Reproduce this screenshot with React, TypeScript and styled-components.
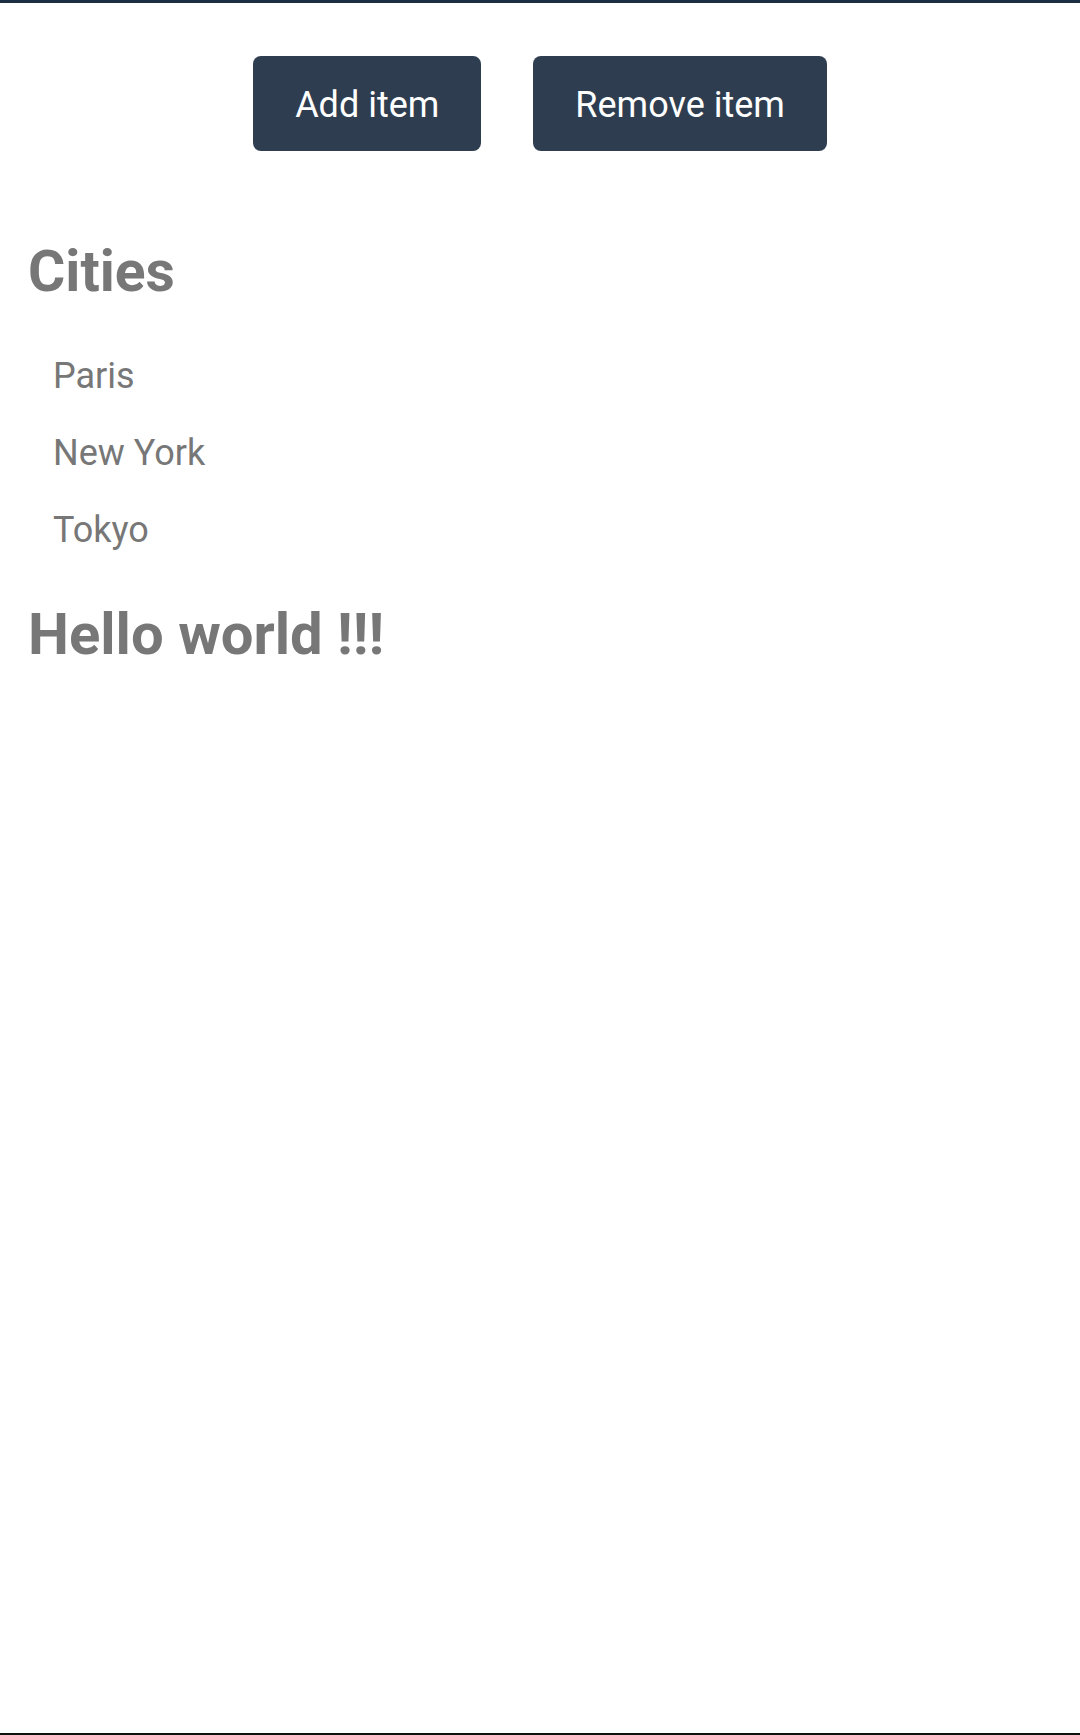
import React from "react";
import styled, { createGlobalStyle } from "styled-components";

const GlobalStyle = createGlobalStyle`
  html, body {
    margin: 0;
    padding: 0;
    background: #ffffff;
  }
  body {
    font-family: Roboto, "Noto Sans", "Liberation Sans", sans-serif;
  }
  * {
    box-sizing: border-box;
  }
`;

const Screen = styled.div`
  min-height: 100vh;
  display: flex;
  flex-direction: column;
  border-top: 3px solid #1c2e43;
  border-bottom: 2px solid #111111;
  background: #ffffff;
`;

const Toolbar = styled.div`
  display: flex;
  justify-content: center;
  gap: 52px;
  padding-top: 53px;
`;

const ActionButton = styled.button`
  height: 95px;
  padding: 3px 42px 0;
  border: none;
  border-radius: 8px;
  background: #2e3e50;
  color: #ffffff;
  font-family: Roboto, "Noto Sans", sans-serif;
  font-size: 36px;
  font-weight: 400;
  cursor: pointer;
`;

const Content = styled.main`
  display: flex;
  flex-direction: column;
  align-items: flex-start;
  padding: 0 0 0 28px;
  color: #777777;
`;

const Heading = styled.h2<{ $size: number; $top: number }>`
  margin: ${(p) => p.$top}px 0 0 0;
  font-size: ${(p) => p.$size}px;
  font-weight: 700;
  line-height: 1.2;
  color: #777777;
`;

const CityList = styled.ul`
  display: flex;
  flex-direction: column;
  gap: 33px;
  list-style: none;
  margin: 48px 0 0 0;
  padding: 0 0 0 25px;
`;

const CityItem = styled.li`
  font-size: 36px;
  line-height: 44px;
  color: #777777;
`;

const cities = ["Paris", "New York", "Tokyo"];

export default function App() {
  return (
    <>
      <GlobalStyle />
      <Screen>
        <Toolbar>
          <ActionButton>Add item</ActionButton>
          <ActionButton>Remove item</ActionButton>
        </Toolbar>
        <Content>
          <Heading $size={57} $top={87}>
            Cities
          </Heading>
          <CityList>
            {cities.map((c) => (
              <CityItem key={c}>{c}</CityItem>
            ))}
          </CityList>
          <Heading $size={58} $top={48}>
            Hello world !!!
          </Heading>
        </Content>
      </Screen>
    </>
  );
}
